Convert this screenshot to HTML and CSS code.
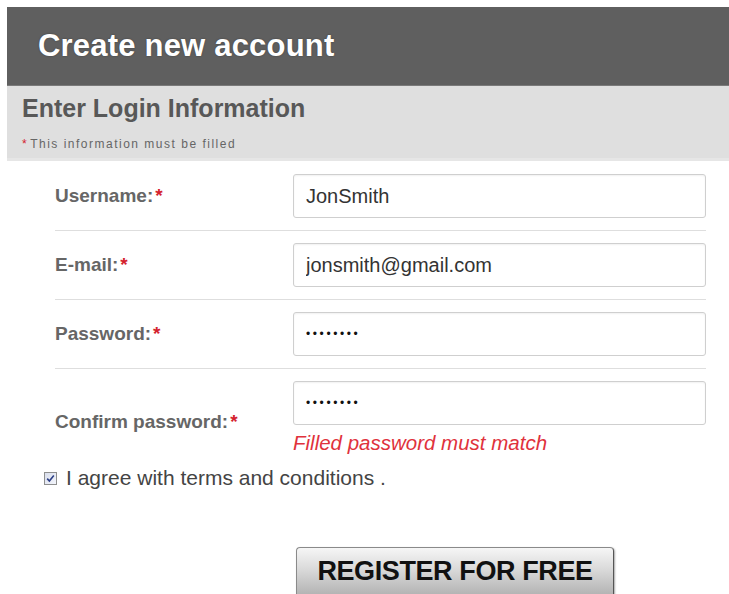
FILE: index.html
```html
<!DOCTYPE html>
<html lang="en">
<head>
<meta charset="utf-8">
<title>Create new account</title>
<link rel="stylesheet" href="styles.css">
</head>
<body>
<div class="page">
  <header class="title-bar">
    <h1>Create new account</h1>
  </header>

  <section class="intro">
    <h2>Enter Login Information</h2>
    <p class="note"><span class="req">*</span>This information must be filled</p>
  </section>

  <form class="signup">
    <div class="row">
      <label class="label" for="username">Username:<span class="req">*</span></label>
      <div class="field">
        <input class="input" id="username" type="text" value="JonSmith">
      </div>
    </div>

    <div class="row">
      <label class="label" for="email">E-mail:<span class="req">*</span></label>
      <div class="field">
        <input class="input" id="email" type="text" value="jonsmith@gmail.com">
      </div>
    </div>

    <div class="row">
      <label class="label" for="password">Password:<span class="req">*</span></label>
      <div class="field">
        <input class="input secret" id="password" type="password" value="secret12">
      </div>
    </div>

    <div class="row row-last">
      <label class="label" for="confirm">Confirm password:<span class="req">*</span></label>
      <div class="field">
        <input class="input secret" id="confirm" type="password" value="secret12">
        <p class="error">Filled password must match</p>
      </div>
    </div>

    <label class="agree">
      <span class="check" aria-hidden="true">
        <svg viewBox="0 0 9 9" width="9" height="9"><path d="M1.2 4.6 L3.4 7 L7.8 1.6" fill="none" stroke="#2c3f86" stroke-width="1.6"/></svg>
      </span>
      <span class="agree-text">I agree with terms and conditions .</span>
    </label>

    <div class="actions">
      <button class="register" type="submit">REGISTER FOR FREE</button>
    </div>
  </form>
</div>
</body>
</html>
```

FILE: styles.css
```css
html, body {
  margin: 0;
  padding: 0;
  background: #ffffff;
}

body {
  font-family: "Liberation Sans", Arial, sans-serif;
  color: #333;
  overflow: hidden;
}

.page {
  padding: 7px 0 0 7px;
}

/* dark title strip */
.title-bar {
  background: #5f5f5f;
  height: 78px;
  display: flex;
  align-items: center;
  padding-left: 31px;
}

.title-bar h1 {
  margin: 0;
  font-size: 31px;
  font-weight: bold;
  color: #ffffff;
  letter-spacing: 0.2px;
  text-shadow: 0 0 2px rgba(0, 0, 0, 0.35);
}

/* grey intro band */
.intro {
  background: #dfdfdf;
  box-sizing: border-box;
  height: 76px;
  padding: 8px 0 0 15px;
  border-top: 1px solid #7a7a7a;
  border-bottom: 3px solid #e6e6e6;
}

.intro h2 {
  margin: 0;
  font-size: 25px;
  font-weight: bold;
  color: #585858;
}

.note {
  margin: 14px 0 0;
  font-size: 12px;
  letter-spacing: 1.5px;
  color: #666;
}

.note .req {
  margin-right: 2px;
}

.req {
  color: #d4222e;
}

/* form rows */
.signup {
  margin: 1px 0 0 48px;
  width: 651px;
}

.row {
  display: flex;
  align-items: center;
  padding: 12px 0;
  border-bottom: 1px solid #dedede;
}

.row-last {
  border-bottom: none;
  padding-bottom: 0;
  align-items: flex-start;
}

.label {
  width: 238px;
  flex: none;
  font-size: 19px;
  font-weight: bold;
  color: #666;
}

.row-last .label {
  padding-top: 30px;
}

.label .req {
  margin-left: 2px;
}

.field {
  flex: 1;
}

.input {
  display: block;
  box-sizing: border-box;
  width: 413px;
  height: 44px;
  margin: 0;
  padding: 0 12px;
  border: 1px solid #cfcfcf;
  border-radius: 3px;
  background: #fff;
  box-shadow: inset 0 1px 2px rgba(0, 0, 0, 0.06);
  font-family: "Liberation Sans", Arial, sans-serif;
  font-size: 20px;
  color: #333;
  outline: none;
}

.secret {
  font-size: 12px;
  letter-spacing: 2.6px;
  color: #111;
}

.error {
  margin: 6px 0 0;
  font-size: 20.5px;
  font-style: italic;
  color: #e0323c;
}

/* terms checkbox */
.agree {
  display: flex;
  align-items: center;
  margin: 11px 0 0 -11px;
  font-size: 21px;
  color: #444;
}

.check {
  box-sizing: border-box;
  width: 13px;
  height: 13px;
  border: 1px solid #8e8f8f;
  background: linear-gradient(135deg, #d9deec 0%, #f3f5fb 100%);
  display: flex;
  align-items: center;
  justify-content: center;
  margin-right: 9px;
}

.check svg {
  display: block;
}

/* submit button */
.actions {
  padding: 57px 0 0 241px;
}

.register {
  width: 318px;
  height: 52px;
  border: 1px solid #8a8a8a;
  border-right-color: #555;
  border-radius: 4px;
  background: linear-gradient(to bottom, #f6f6f6 0%, #d8d8d8 45%, #aeaeae 100%);
  box-shadow: 1px 1px 2px rgba(0, 0, 0, 0.35);
  font-family: "Liberation Sans", Arial, sans-serif;
  font-size: 27px;
  font-weight: bold;
  color: #111;
  padding: 0 0 4px;
  letter-spacing: -0.4px;
  cursor: pointer;
}
```
